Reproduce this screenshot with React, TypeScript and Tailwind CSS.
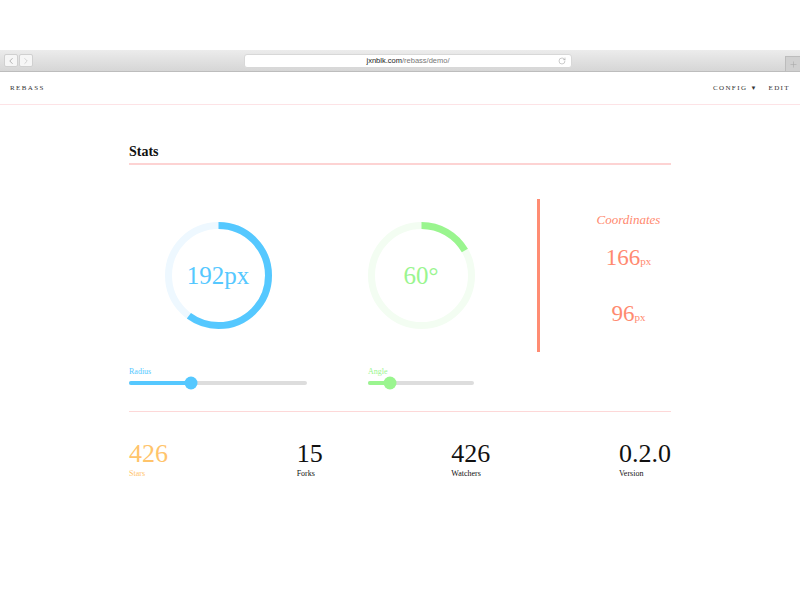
import { RotateCw, ChevronLeft, ChevronRight, Plus } from 'lucide-react'

const serif = "font-['Liberation_Serif','DejaVu_Serif',serif]"

function Ring({ value, color, track, label }: { value: number; color: string; track: string; label: string }) {
  const r = 50
  const c = 2 * Math.PI * r
  return (
    <div className="relative w-[107px] h-[107px] shrink-0">
      <svg width="107" height="107" viewBox="0 0 107 107" className="-rotate-90">
        <circle cx="53.5" cy="53.5" r={r} fill="none" stroke={track} strokeWidth="7" />
        <circle
          cx="53.5"
          cy="53.5"
          r={r}
          fill="none"
          stroke={color}
          strokeWidth="7"
          strokeDasharray={`${c * value} ${c}`}
        />
      </svg>
      <div className="absolute inset-0 flex items-center justify-center">
        <span className="text-[25px] leading-none" style={{ color }}>{label}</span>
      </div>
    </div>
  )
}

function Slider({ label, color, width, pos }: { label: string; color: string; width: number; pos: number }) {
  return (
    <div style={{ width }}>
      <div className="text-[8px] leading-none mb-[5px]" style={{ color }}>{label}</div>
      <div className="relative h-[4px] rounded-full bg-[#dddddd]">
        <div className="absolute left-0 top-0 h-[4px] rounded-full" style={{ width: pos, background: color }} />
        <div
          className="absolute top-1/2 w-[13px] h-[13px] rounded-full -translate-y-1/2 -translate-x-1/2"
          style={{ left: pos, background: color }}
        />
      </div>
    </div>
  )
}

export default function App() {
  const stats = [
    { n: '426', label: 'Stars', color: 'text-[#ffc46b]' },
    { n: '15', label: 'Forks', color: 'text-[#111111]' },
    { n: '426', label: 'Watchers', color: 'text-[#111111]' },
    { n: '0.2.0', label: 'Version', color: 'text-[#111111]' },
  ]

  return (
    <div className={`w-[800px] h-[600px] bg-white ${serif} text-[#111]`}>
      <div className="h-[50px]" />
      {/* browser chrome */}
      <div className="h-[22px] bg-gradient-to-b from-[#ececec] to-[#d6d6d6] border-b border-[#bdbdbd] flex items-center relative">
        <div className="ml-[4px] flex gap-[1px]">
          <div className="w-[14px] h-[13px] rounded-[2px] bg-[#f6f6f6] border border-[#d0d0d0] flex items-center justify-center text-[#888]">
            <ChevronLeft size={10} strokeWidth={1.5} />
          </div>
          <div className="w-[14px] h-[13px] rounded-[2px] bg-[#f6f6f6] border border-[#d0d0d0] flex items-center justify-center text-[#bbb]">
            <ChevronRight size={10} strokeWidth={1.5} />
          </div>
        </div>
        <div className="ml-[211px] w-[328px] h-[14px] rounded-[3px] bg-white border border-[#d8d8d8] relative flex items-center justify-center font-['Liberation_Sans',sans-serif] text-[7.5px]">
          <span className="text-[#222]">jxnblk.com</span>
          <span className="text-[#777]">/rebass/demo/</span>
          <RotateCw size={8} className="absolute right-[5px] text-[#999]" strokeWidth={1.5} />
        </div>
        <div className="absolute right-0 bottom-0 w-[15px] h-[15px] bg-[#d0d0d0] border-l border-t border-[#bcbcbc] flex items-center justify-center text-[#a8a8a8]">
          <Plus size={9} strokeWidth={1.5} />
        </div>
      </div>
      {/* nav */}
      <div className="h-[33px] border-b border-[#fde3e6] flex items-center justify-between px-[10px] text-[7px] tracking-[0.2em] text-[#333]">
        <span>REBASS</span>
        <div className="flex items-center gap-[12px]">
          <span>CONFIG <span className="text-[6px] tracking-normal">▼</span></span>
          <span>EDIT</span>
        </div>
      </div>

      <div className="w-[542px] mx-auto">
        <div className="pt-[36px] pb-0 border-b-2 border-[#fdd3d3] text-[14px] font-bold leading-[22px]">Stats</div>

        <div className="mt-[34px] flex h-[153px]">
          <div className="w-[178px] flex items-center justify-center">
            <Ring value={0.6} color="#55c8ff" track="#eef8ff" label="192px" />
          </div>
          <div className="ml-[61px] w-[106px] flex items-center justify-center">
            <Ring value={60 / 360} color="#9af58f" track="#f3fdf2" label="60°" />
          </div>
          <div className="ml-[63px] border-l-[3px] border-[#ff8c73] flex-1 pl-[46px] text-center text-[#ff8a70]">
            <div className="pt-[14px] italic text-[13px] leading-none">Coordinates</div>
            <div className="mt-[20px] text-[23px] leading-none">166<span className="text-[11px]">px</span></div>
            <div className="mt-[33px] text-[23px] leading-none">96<span className="text-[11px]">px</span></div>
          </div>
        </div>

        <div className="mt-[16px] flex">
          <Slider label="Radius" color="#55c8ff" width={178} pos={62} />
          <div className="ml-[61px]">
            <Slider label="Angle" color="#9af58f" width={106} pos={22} />
          </div>
        </div>

        <div className="mt-[26px] border-t border-[#fdd8d8]" />

        <div className="mt-[29px] flex justify-between">
          {stats.map((s) => (
            <div key={s.label} className={s.color}>
              <div className="text-[26px] leading-none">{s.n}</div>
              <div className="text-[8px] mt-[3px] leading-none">{s.label}</div>
            </div>
          ))}
        </div>
      </div>
    </div>
  )
}
